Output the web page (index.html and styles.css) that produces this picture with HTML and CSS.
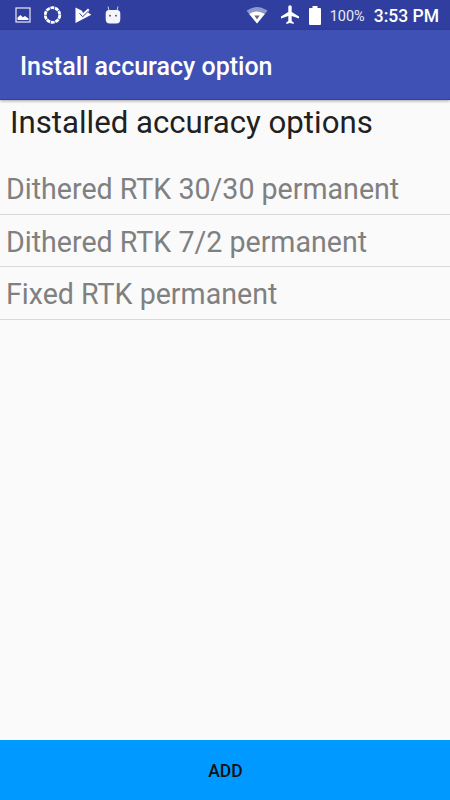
FILE: index.html
```
<!DOCTYPE html>
<html lang="en">
<head>
    <meta charset="UTF-8">
    <meta name="viewport" content="width=device-width, initial-scale=1.0">
    <title>Install accuracy option</title>
    <link rel="stylesheet" href="styles.css">
</head>
<body>

<div class="screen">
    <!-- Status bar -->
    <div class="status-bar">
        <div class="status-left">
            <svg width="16" height="16" viewBox="0 0 16 16">
                <rect x="1" y="1" width="14" height="14" fill="none" stroke="#e8eaf6" stroke-width="1.200"/>
                <path d="M2.500 13v-2.500L5.500 8l2.300 2.300L10 9l3.500 2.500V13z" fill="#fff"/>
            </svg>
            <svg width="18" height="18" viewBox="0 0 18 18">
                <circle cx="8.500" cy="9" r="7.300" fill="none" stroke="#fff" stroke-width="2.800" stroke-dasharray="3.900 .687"/>
            </svg>
            <svg width="17" height="18" viewBox="0 0 17 18">
                <path d="M.5 1.500l6.500 3.300L8 7l5-4.500 1.500 1.500-1.500 2.500L16.300 8.800.5 17z" fill="#fff"/>
                <path d="M4.500 7.300l3.200 3.500 5.800-5.800" fill="none" stroke="#303f9f" stroke-width="1"/>
            </svg>
            <svg width="16" height="18" viewBox="0 0 16 18">
                <path d="M3 .5l1 4M13 .5l-1 4" stroke="#c5cae9" stroke-width="1"/>
                <path d="M.7 7.500Q.7 4 4 4h8q3.300 0 3.300 3.500V13q0 4.500-4 4.500H4.700q-4 0-4-4.500z" fill="#f4f5fb"/>
                <circle cx="5" cy="9.700" r=".9" fill="#303f9f"/>
                <circle cx="11" cy="9.700" r=".9" fill="#303f9f"/>
            </svg>
        </div>
        <div class="status-right">
            <svg class="wifi" width="22" height="18" viewBox="0 0 22 18">
                <path d="M.5 4.800Q11-3 21.500 4.800L11 17.500z" fill="#8f97cb"/>
                <path d="M3.200 8Q11 2.800 18.800 8L11 17.500z" fill="#fff"/>
                <path d="M8.300 9.500h5.400L11 13.500z" fill="#6c6c7c"/>
            </svg>
            <svg class="plane" width="18" height="20" viewBox="0 0 18 20">
                <path d="M18 13.500v-1.900l-7.300-4.700V2.100C10.700 1 10 .3 9 .3S7.300 1 7.300 2.100v4.800L0 11.600v1.900l7.300-2.400v5l-2 1.500V19L9 18l3.700 1v-1.400l-2-1.500v-5z" fill="#fff"/>
            </svg>
            <svg class="battery" width="12" height="19" viewBox="0 0 12 19">
                <path d="M3.500 0h5v2H11q1 0 1 1v15q0 1-1 1H1q-1 0-1-1V3q0-1 1-1h2.500z" fill="#fff"/>
            </svg>
            <span class="percent">100%</span>
            <span class="clock">3:53 PM</span>
        </div>
    </div>

    <!-- App bar -->
    <div class="app-bar">Install accuracy option</div>

    <!-- Installed options -->
    <div class="content">
        <h1 class="heading">Installed accuracy options</h1>
        <ul class="options">
            <li>Dithered RTK 30/30 permanent</li>
            <li>Dithered RTK 7/2 permanent</li>
            <li>Fixed RTK permanent</li>
        </ul>
    </div>

    <button class="add-button">ADD</button>
</div>

</body>
</html>
```
FILE: styles.css
```
body {
    margin: 0;
    font-family: Roboto, sans-serif;
    background-color: #fafafa;
}
.screen {
    display: flex;
    flex-direction: column;
    height: 800px;
    overflow: hidden;
}
.status-bar {
    display: flex;
    justify-content: space-between;
    align-items: center;
    box-sizing: border-box;
    height: 30px;
    padding: 0 11px 0 14.5px;
    background-color: #303f9f;
    color: white;
}
.status-left, .status-right {
    display: flex;
    align-items: center;
}
.status-left {
    gap: 13px;
}
.wifi {
    margin-right: 13px;
}
.plane {
    margin-right: 10px;
}
.battery {
    margin-right: 9px;
}
.percent {
    margin-right: 9px;
    padding-top: 2px;
    color: #e8eaf6;
    font-size: 14.5px;
}
.clock {
    padding-top: 2px;
    font-size: 17.5px;
    font-weight: 500;
}
.app-bar {
    position: relative;
    box-sizing: border-box;
    height: 70px;
    padding-left: 20px;
    border-bottom: 1px solid #303f9f;
    background-color: #3f51b5;
    box-shadow: 0 1px 3px rgba(0, 0, 0, 0.35);
    color: white;
    font-size: 25px;
    font-weight: 500;
    line-height: 74px;
}
.content {
    flex: 1;
}
.heading {
    margin: 0;
    padding: 4px 10px 0;
    color: #212121;
    font-size: 31.2px;
    font-weight: 400;
    line-height: 37px;
}
.options {
    margin: 21px 0 0;
    padding: 0;
    list-style: none;
}
.options li {
    box-sizing: border-box;
    height: 52.5px;
    padding-left: 6px;
    border-bottom: 1px solid #d8d8d8;
    color: #808080;
    font-size: 28.6px;
    line-height: 55px;
}
.add-button {
    height: 60px;
    padding: 2px 0 0 1px;
    border: none;
    background-color: #0099ff;
    color: #111;
    font-family: inherit;
    font-size: 17.5px;
    font-weight: 500;
}
```
